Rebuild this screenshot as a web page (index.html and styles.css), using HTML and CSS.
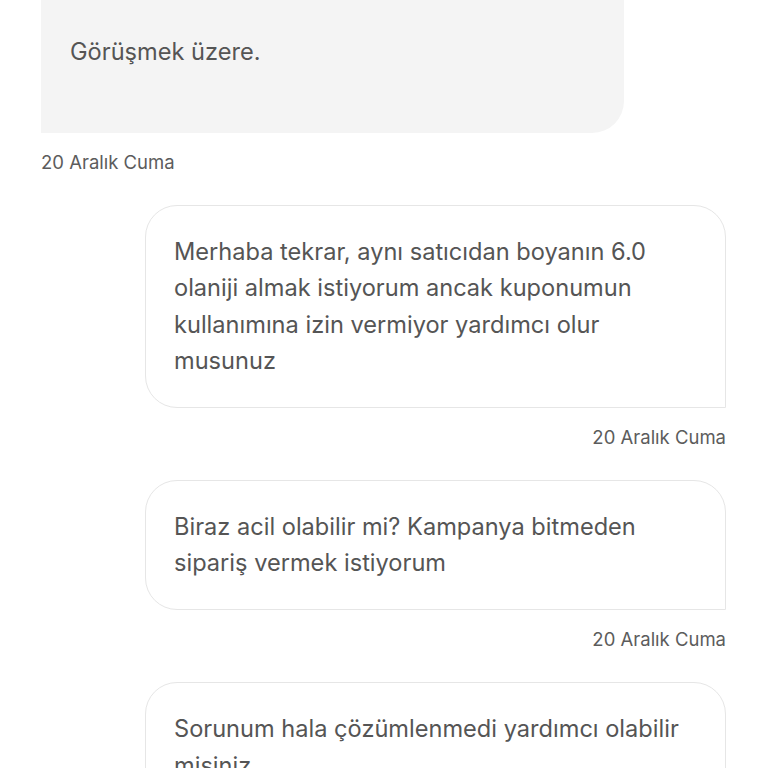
FILE: index.html
```html
<!DOCTYPE html>
<html>
<head>
<meta charset="utf-8">
<link rel="stylesheet" href="styles.css">
</head>
<body>
<div class="chat">
  <div class="msg in">
    <div class="bubble bubble-in">Görüşmek üzere.</div>
    <div class="date">20 Aralık Cuma</div>
  </div>
  <div class="msg out">
    <div class="bubble bubble-out">Merhaba tekrar, aynı satıcıdan boyanın 6.0 olaniji almak istiyorum ancak kuponumun kullanımına izin vermiyor yardımcı olur musunuz</div>
    <div class="date">20 Aralık Cuma</div>
  </div>
  <div class="msg out">
    <div class="bubble bubble-out">Biraz acil olabilir mi? Kampanya bitmeden sipariş vermek istiyorum</div>
    <div class="date">20 Aralık Cuma</div>
  </div>
  <div class="msg out">
    <div class="bubble bubble-out">Sorunum hala çözümlenmedi yardımcı olabilir misiniz</div>
    <div class="date">20 Aralık Cuma</div>
  </div>
</div>
</body>
</html>
```
FILE: styles.css
```css
html, body {
  margin: 0;
  padding: 0;
  background: #ffffff;
}
body {
  font-family: Inter, "Noto Sans", sans-serif;
  color: #555555;
  overflow: hidden;
  height: 768px;
}
.chat {
  display: flex;
  flex-direction: column;
  padding: 0 42px 0 41px;
}
.msg {
  display: flex;
  flex-direction: column;
}
.msg.in {
  align-items: flex-start;
  margin-bottom: 32px;
}
.msg.out {
  align-items: flex-end;
  margin-bottom: 32px;
}
.bubble {
  font-size: 23.6px;
  line-height: 36.2px;
  box-sizing: border-box;
}
.bubble-in {
  width: 583px;
  background: #f4f4f4;
  padding: 34px 29px 63px 29px;
  border-bottom-right-radius: 32px;
}
.bubble-out {
  margin-left: 104px;
  align-self: stretch;
  background: #ffffff;
  border: 1px solid #e6e6e6;
  border-radius: 32px 32px 0 32px;
  padding: 28px 28px 28px 28px;
}
.date {
  font-size: 18.5px;
  line-height: 22px;
  color: #5c5c5c;
  margin-top: 18px;
}
```
